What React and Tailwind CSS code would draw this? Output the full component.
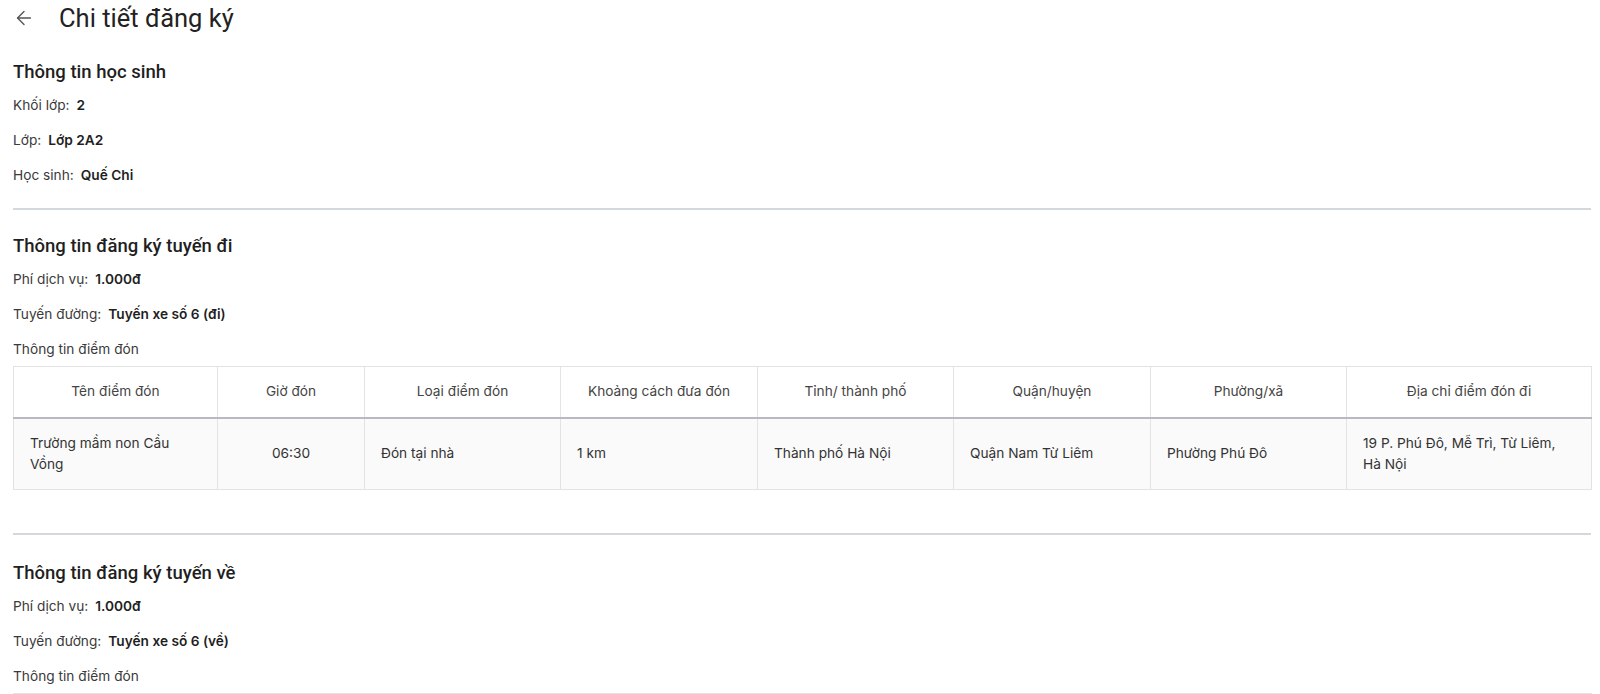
import { ArrowLeft } from 'lucide-react'

const columns = [
  { title: 'Tên điểm đón', w: 'w-[204px]' },
  { title: 'Giờ đón', w: 'w-[147px]', center: true },
  { title: 'Loại điểm đón', w: 'w-[196px]' },
  { title: 'Khoảng cách đưa đón', w: 'w-[197px]' },
  { title: 'Tỉnh/ thành phố', w: 'w-[196px]' },
  { title: 'Quận/huyện', w: 'w-[197px]' },
  { title: 'Phường/xã', w: 'w-[196px]' },
  { title: 'Địa chỉ điểm đón đi', w: 'w-[245px]' },
]

const row = [
  'Trường mầm non Cầu Vồng',
  '06:30',
  'Đón tại nhà',
  '1 km',
  'Thành phố Hà Nội',
  'Quận Nam Từ Liêm',
  'Phường Phú Đô',
  '19 P. Phú Đô, Mễ Trì, Từ Liêm, Hà Nội',
]

function Field({ label, value }) {
  return (
    <p className="text-[13.7px] leading-[21px] text-[#3a3a3a]">
      {label}:<span className="ml-[7px] font-semibold text-[#1f1f1f]">{value}</span>
    </p>
  )
}

function Heading({ children }) {
  return (
    <h2 className="text-[18.5px] leading-[22px] font-medium text-[#1f1f1f]" style={{ fontFamily: 'Roboto, sans-serif' }}>
      {children}
    </h2>
  )
}

function PickupTable() {
  return (
    <table className="table-fixed border-collapse w-full border border-[#e3e3e3] mt-[6px] text-[13.7px]">
      <thead>
        <tr className="h-[51px]">
          {columns.map(c => (
            <th key={c.title} className={`${c.w} font-normal text-[#444] text-center border-x border-[#e3e3e3] border-b-2 border-b-[#b9b9c2]`}>
              {c.title}
            </th>
          ))}
        </tr>
      </thead>
      <tbody>
        <tr className="h-[72px] bg-[#fafafa]">
          {row.map((v, i) => (
            <td key={i} className={`border border-[#e3e3e3] px-[16px] leading-[21px] text-[#333] ${columns[i].center ? 'text-center' : ''}`}>
              {v}
            </td>
          ))}
        </tr>
      </tbody>
    </table>
  )
}

export default function App() {
  return (
    <div className="h-screen overflow-hidden bg-white pl-[13px]" style={{ fontFamily: 'Inter, sans-serif' }}>
      <div className="w-[1578px]">
        <div className="flex items-center h-[36px]">
          <ArrowLeft className="w-[22px] h-[22px] text-[#555]" strokeWidth={1.5} />
          <h1 className="ml-[24px] text-[25.5px] font-normal text-[#222]" style={{ fontFamily: 'Roboto, sans-serif' }}>
            Chi tiết đăng ký
          </h1>
        </div>

        <div className="pt-[25px] pb-[22px]">
          <Heading>Thông tin học sinh</Heading>
          <div className="flex flex-col gap-[14px] mt-[12px]">
            <Field label="Khối lớp" value="2" />
            <Field label="Lớp" value="Lớp 2A2" />
            <Field label="Học sinh" value="Quế Chi" />
          </div>
        </div>

        <div className="h-[2px] bg-[#d3d7de]" />

        <div className="pt-[25px] pb-[43px]">
          <Heading>Thông tin đăng ký tuyến đi</Heading>
          <div className="flex flex-col gap-[14px] mt-[12px]">
            <Field label="Phí dịch vụ" value="1.000đ" />
            <Field label="Tuyến đường" value="Tuyến xe số 6 (đi)" />
            <p className="text-[13.7px] leading-[21px] text-[#3a3a3a]">Thông tin điểm đón</p>
          </div>
          <PickupTable />
        </div>

        <div className="h-[2px] bg-[#d3d7de]" />

        <div className="pt-[27px] pb-[40px]">
          <Heading>Thông tin đăng ký tuyến về</Heading>
          <div className="flex flex-col gap-[14px] mt-[12px]">
            <Field label="Phí dịch vụ" value="1.000đ" />
            <Field label="Tuyến đường" value="Tuyến xe số 6 (về)" />
            <p className="text-[13.7px] leading-[21px] text-[#3a3a3a]">Thông tin điểm đón</p>
          </div>
          <PickupTable />
        </div>
      </div>
    </div>
  )
}
